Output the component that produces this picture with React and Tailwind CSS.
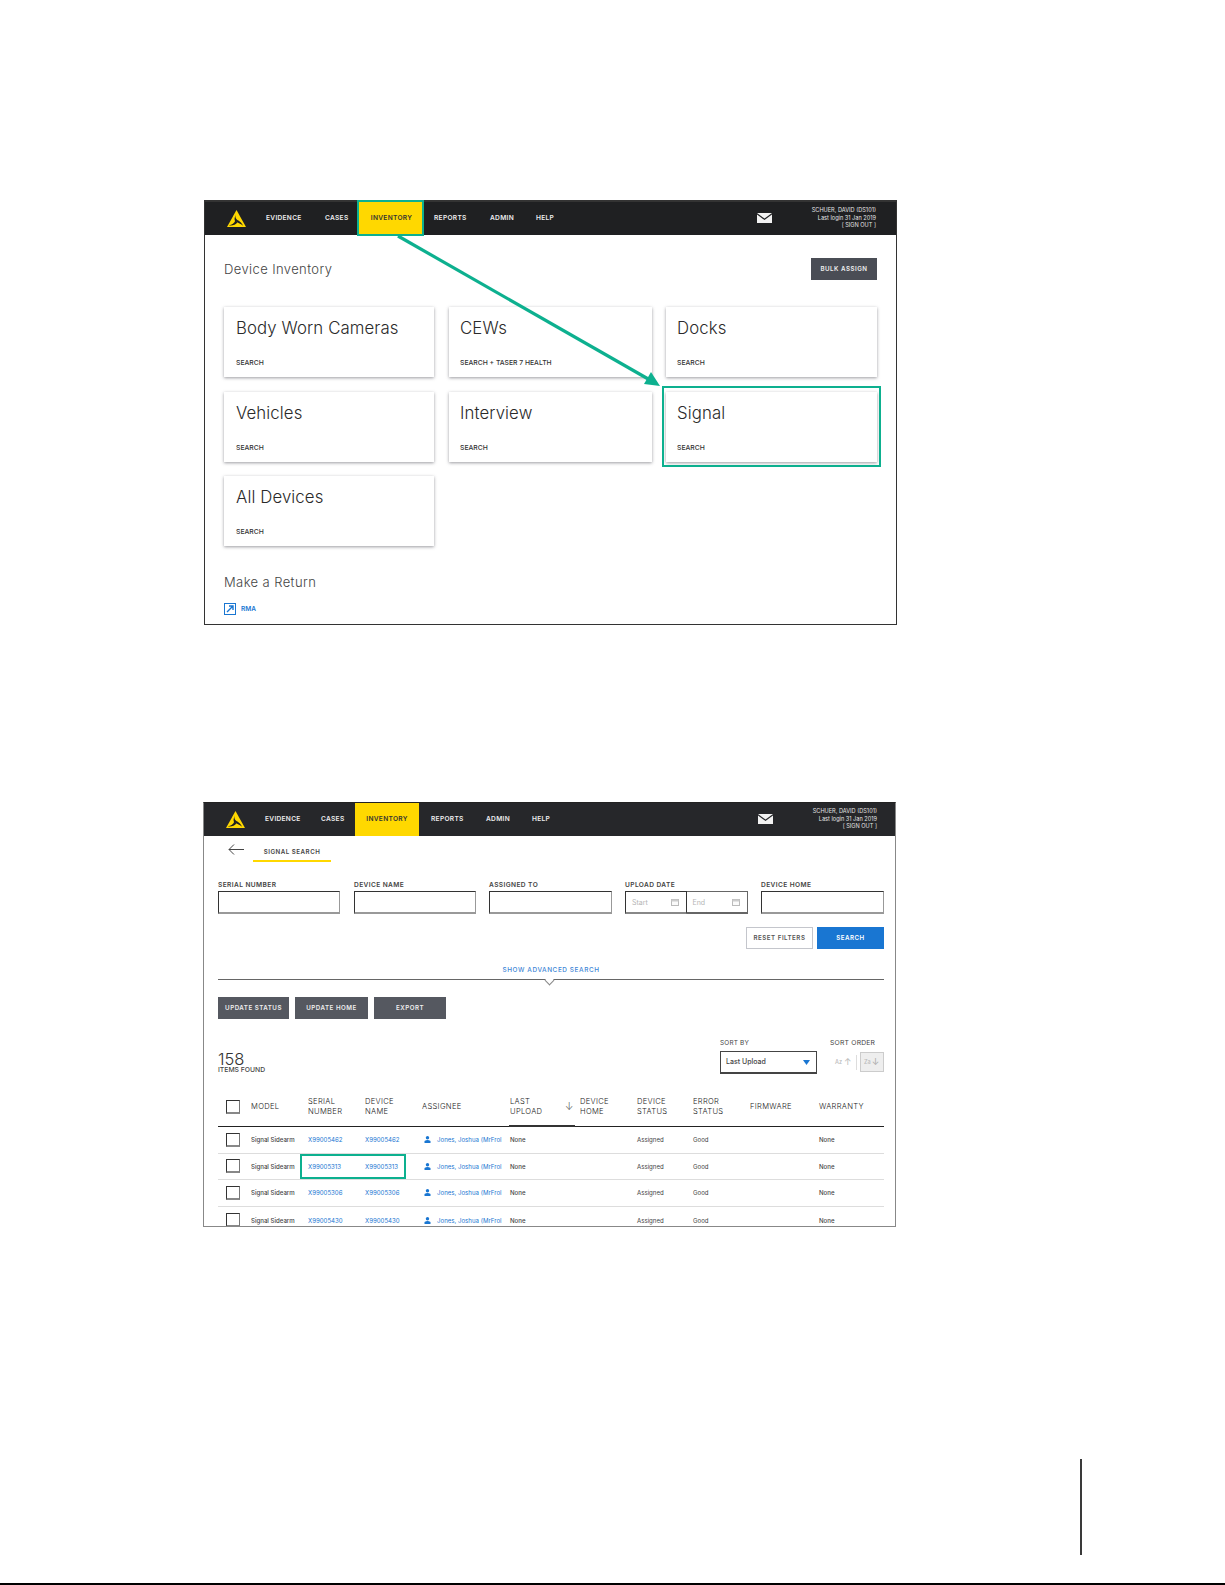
const font = "font-['Inter','Liberation_Sans',sans-serif]";

function Logo() {
  return (
    <svg width="19" height="18" viewBox="0 0 20 19">
      <path d="M10 0 L20 18 L0 18 Z" fill="#ffd800" />
      <path d="M10 4 C8 7 9 10 12 11 C14 12 15.5 14 17 16.5 C14 14.5 11 13.5 9 12 C7.5 11 7.5 8 10 4 Z" fill="#1f2022" />
      <path d="M8.8 11 C8 14 5 15.5 2 16 C5 16.8 9 15.8 11 12.8 Z" fill="#1f2022" />
    </svg>
  );
}

function Envelope() {
  return (
    <svg width="15" height="10" viewBox="0 0 15 10">
      <path d="M0 0 H15 L7.5 5.5 Z" fill="#f2f2f2" />
      <path d="M0 1.5 L7.5 7 L15 1.5 V10 H0 Z" fill="#f2f2f2" />
    </svg>
  );
}

const navText = "text-[6.6px] font-semibold tracking-[0.3px]";

function Nav({ variant }) {
  const first = variant === 1;
  return (
    <div className={`flex h-[33px] shrink-0 items-center ${first ? "bg-[#1f2022]" : "bg-[#26272a]"}`}>
      <div className="ml-[22px] flex w-[39px] shrink-0">
        <Logo />
      </div>
      <span className={`${navText} text-[#eeeeee] ${first ? "w-[59px]" : "w-[56px]"}`}>EVIDENCE</span>
      <span className={`${navText} text-[#eeeeee] ${first ? "w-[33px]" : "w-[34px]"}`}>CASES</span>
      <span className={`${navText} flex h-full w-[64px] items-center justify-center bg-[#ffd800] text-[#333333] ${first ? "pl-[3px]" : ""}`}>INVENTORY</span>
      <span className={`${navText} ml-[12px] text-[#eeeeee] ${first ? "w-[56px]" : "w-[55px]"}`}>REPORTS</span>
      <span className={`${navText} w-[46px] text-[#eeeeee]`}>ADMIN</span>
      <span className={`${navText} text-[#eeeeee]`}>HELP</span>
      <div className="mb-[1px] ml-auto mr-[40px]">
        <Envelope />
      </div>
      <div className={`flex flex-col items-end text-[5.6px] leading-[7.5px] text-[#e4e4e4] ${first ? "mr-[20px]" : "mr-[18px]"}`}>
        <span>SCHUER, DAVID (DS101)</span>
        <span>Last login 31 Jan 2019</span>
        <span>[ SIGN OUT ]</span>
      </div>
    </div>
  );
}

function Card({ title, sub, width, className = "" }) {
  return (
    <div className={`flex h-[70px] shrink-0 flex-col bg-white shadow-[0_1px_3px_rgba(60,60,70,0.5)] ${width} ${className}`}>
      <span className="mt-[11px] text-[16.8px] font-light leading-[21px] tracking-[0.1px] text-[#2a2a2a]">{title}</span>
      <span className="mb-[10px] mt-auto text-[6.8px] font-medium leading-[8px] text-[#333333]">{sub}</span>
    </div>
  );
}

function InventoryScreen() {
  return (
    <div className="relative ml-[204px] flex h-[425px] w-[693px] flex-col border border-t-2 border-[#333333]">
      <Nav variant={1} />
      <div className="flex flex-col pl-[19px] pr-[19px]">
        <div className="mt-[22px] flex items-center justify-between">
          <span className="text-[13px] font-light leading-[24px] tracking-[0.4px] text-[#444444]">Device Inventory</span>
          <button className="h-[22px] w-[66px] bg-[#4a4d55] text-[6.2px] font-semibold tracking-[0.5px] text-[#f0f0f0]">BULK ASSIGN</button>
        </div>
        <div className="mt-[26px] flex">
          <Card title="Body Worn Cameras" sub="SEARCH" width="w-[210px] pl-[12px]" />
          <Card title="CEWs" sub="SEARCH + TASER 7 HEALTH" width="w-[203px] pl-[11px]" className="ml-[15px]" />
          <Card title="Docks" sub="SEARCH" width="w-[211px] pl-[11px]" className="ml-[14px]" />
        </div>
        <div className="mt-[15px] flex">
          <Card title="Vehicles" sub="SEARCH" width="w-[210px] pl-[12px]" />
          <Card title="Interview" sub="SEARCH" width="w-[203px] pl-[11px]" className="ml-[15px]" />
          <Card title="Signal" sub="SEARCH" width="w-[211px] pl-[11px]" className="ml-[14px]" />
        </div>
        <div className="mt-[14px] flex">
          <Card title="All Devices" sub="SEARCH" width="w-[210px] pl-[12px]" />
        </div>
        <span className="mt-[27px] text-[13px] font-light leading-[18px] tracking-[0.4px] text-[#444444]">Make a Return</span>
        <div className="mt-[14px] flex items-center gap-[5px]">
          <svg className="mt-[-2px]" width="12" height="12" viewBox="0 0 12 12">
            <rect x="0.5" y="0.5" width="11" height="11" fill="none" stroke="#1976d2" />
            <path d="M3 9 L8.5 3.5 M5 3 H9 V7" fill="none" stroke="#1976d2" strokeWidth="1.4" />
          </svg>
          <span className="text-[6.5px] font-semibold text-[#1976d2]">RMA</span>
        </div>
      </div>
      {/* annotations on top of the screenshot */}
      <div className="pointer-events-none absolute left-[152px] top-[-2px] h-[36px] w-[67px] border-2 border-[#0db08f]" />
      <div className="pointer-events-none absolute left-[457px] top-[184px] h-[81px] w-[219px] border-2 border-[#0db08f]" />
      <svg className="pointer-events-none absolute left-[-1px] top-[-2px]" width="693" height="425" viewBox="0 0 693 425">
        <path d="M194 36 L446 180" stroke="#0db08f" strokeWidth="3.2" fill="none" />
        <path d="M456 186 L440 184 L447 172 Z" fill="#0db08f" />
      </svg>
    </div>
  );
}

const labelText = "text-[6.6px] font-semibold leading-[8px] tracking-[0.4px] text-[#444444]";

function Field({ label, width }) {
  return (
    <div className={`flex flex-col ${width}`}>
      <span className={labelText}>{label}</span>
      <div className="mt-[2px] h-[23px] border border-[#333333] border-b-2 border-b-[#999999] border-r-[#999999] bg-white" />
    </div>
  );
}

function DateCell({ text, dark }) {
  return (
    <div className={`flex h-[23px] w-[61.5px] items-center justify-between border border-b-2 pl-[6px] pr-[7px] ${dark ? "border-[#333333] border-b-[#888888]" : "border-[#666666] border-l-0"}`}>
      <span className="text-[7px] leading-[9px] text-[#b5b5b5]">{text}</span>
      <svg width="8" height="7" viewBox="0 0 8 7">
        <rect x="0.5" y="0.5" width="7" height="6" fill="#fafafa" stroke="#bbbbbb" />
        <rect x="0.5" y="0.5" width="7" height="2" fill="#cccccc" />
      </svg>
    </div>
  );
}

const columns = "grid grid-cols-[33px_57px_57px_57px_88px_70px_57px_56px_57px_69px_65px]";

function Checkbox() {
  return <div className="h-[14px] w-[14px] border border-[#333333] border-b-2 border-b-[#888888] border-r-[#777777] bg-white" />;
}

function HeaderCell({ children, className = "" }) {
  return <div className={`flex items-center text-[7.6px] font-light leading-[9.5px] tracking-[0.3px] text-[#222222] ${className}`}>{children}</div>;
}

const rows = ["X99005462", "X99005313", "X99005306", "X99005430"];

function Row({ serial, last }) {
  return (
    <div className={`${columns} h-[26.6px] shrink-0 items-center text-[6.1px] text-[#444444] ${last ? "" : "border-b border-[#dddddd]"}`}>
      <div className="pl-[8px]">
        <Checkbox />
      </div>
      <span className="font-medium">Signal Sidearm</span>
      <span className="text-[#1976d2]">{serial}</span>
      <span className="text-[#1976d2]">{serial}</span>
      <span className="flex items-center gap-[6px] whitespace-nowrap pl-[2px] text-[#1976d2]">
        <svg width="7" height="7" viewBox="0 0 7 7">
          <circle cx="3.5" cy="1.7" r="1.7" fill="#1976d2" />
          <path d="M0.5 7 V5 Q3.5 3 6.5 5 V7 Z" fill="#1976d2" />
        </svg>
        Jones, Joshua (MrFrol
      </span>
      <span className="font-medium">None</span>
      <span />
      <span>Assigned</span>
      <span>Good</span>
      <span />
      <span className="font-medium">None</span>
    </div>
  );
}

function SearchScreen() {
  return (
    <div className="relative ml-[203px] mt-[177px] flex h-[425px] w-[693px] flex-col overflow-hidden border border-[#888888] border-t-[#222222]">
      <Nav variant={2} />
      <div className="flex flex-col pl-[14px] pr-[11px]">
        <div className="relative flex h-[27px]">
          <svg className="ml-[10px] mt-[8px]" width="16" height="11" viewBox="0 0 16 11">
            <path d="M16 5.5 H1 M6 0.5 L1 5.5 L6 10.5" fill="none" stroke="#444444" strokeWidth="1" />
          </svg>
          <div className="ml-[9px] mt-[11px] flex h-fit w-[78px] flex-col items-center border-b-2 border-[#ffd800] pb-[4px]">
            <span className="text-[6.2px] font-semibold leading-[9px] tracking-[0.5px] text-[#444444]">SIGNAL SEARCH</span>
          </div>
        </div>
        <div className="mt-[18px] flex">
          <Field label="SERIAL NUMBER" width="w-[122px]" />
          <div className="w-[14px]" />
          <Field label="DEVICE NAME" width="w-[122px]" />
          <div className="w-[13px]" />
          <Field label="ASSIGNED TO" width="w-[123px]" />
          <div className="w-[13px]" />
          <div className="flex w-[123px] flex-col">
            <span className={labelText}>UPLOAD DATE</span>
            <div className="mt-[2px] flex">
              <DateCell text="Start" dark />
              <DateCell text="End" />
            </div>
          </div>
          <div className="w-[13px]" />
          <Field label="DEVICE HOME" width="w-[123px]" />
        </div>
        <div className="mt-[13px] flex justify-end gap-[4px]">
          <button className="h-[22px] w-[67px] border border-[#c4c6cc] bg-white text-[6.2px] font-semibold tracking-[0.5px] text-[#555555]">RESET FILTERS</button>
          <button className="h-[22px] w-[67px] bg-[#1976d2] text-[6.2px] font-semibold tracking-[0.5px] text-white">SEARCH</button>
        </div>
        <div className="mt-[17px] text-center text-[6.4px] font-medium leading-[9px] tracking-[0.6px] text-[#3d86d6]">SHOW ADVANCED SEARCH</div>
        <div className="relative mt-[4px] border-b border-[#666666]">
          <div className="absolute left-[328px] top-[-2px] h-[7px] w-[7px] rotate-45 border-b border-r border-[#888888] bg-white" />
        </div>
        <div className="mt-[17px] flex gap-[6px]">
          <button className="h-[22px] w-[71px] bg-[#555860] text-[6.2px] font-semibold tracking-[0.5px] text-[#eeeeee]">UPDATE STATUS</button>
          <button className="h-[22px] w-[73px] bg-[#555860] text-[6.2px] font-semibold tracking-[0.5px] text-[#eeeeee]">UPDATE HOME</button>
          <button className="h-[22px] w-[72px] bg-[#555860] text-[6.2px] font-semibold tracking-[0.5px] text-[#eeeeee]">EXPORT</button>
        </div>
        <div className="mt-[19px] flex h-[38px]">
          <div className="mt-[15px] flex flex-col">
            <span className="text-[16.5px] font-light leading-[13px] text-[#333333]">158</span>
            <span className="text-[6.8px] font-medium leading-[8px] text-[#444444]">ITEMS FOUND</span>
          </div>
          <div className="ml-auto mt-[1px] flex flex-col">
            <span className="text-[6.4px] leading-[8px] tracking-[0.2px] text-[#444444]">SORT BY</span>
            <div className="mt-[4px] flex h-[23px] w-[97px] items-center justify-between border border-b-2 border-[#444444] pl-[5px] pr-[6px]">
              <span className="text-[7px] font-medium text-[#444444]">Last Upload</span>
              <svg width="7" height="5" viewBox="0 0 7 5">
                <path d="M0 0 H7 L3.5 5 Z" fill="#1976d2" />
              </svg>
            </div>
          </div>
          <div className="ml-[13px] mt-[1px] flex w-[54px] flex-col">
            <span className="whitespace-nowrap text-[6.8px] leading-[8px] tracking-[0.2px] text-[#444444]">SORT ORDER</span>
            <div className="mt-[5px] flex h-[20px] items-center">
              <span className="ml-[5px] text-[5.6px] font-medium text-[#bbbbbb]">Az</span>
              <span className="ml-[2px] text-[9px] leading-[10px] text-[#bbbbbb]">↑</span>
              <div className="ml-[4px] h-[15px] w-px bg-[#dddddd]" />
              <div className="ml-[3px] flex h-[20px] w-[24px] items-center justify-center gap-[1px] border border-[#cccccc] bg-[#eeeeee]">
                <span className="text-[5.6px] font-medium text-[#bbbbbb]">Za</span>
                <span className="text-[9px] leading-[10px] text-[#aaaaaa]">↓</span>
              </div>
            </div>
          </div>
        </div>
        <div className={`${columns} mt-[13px] h-[38px] border-b border-[#222222] pb-[2px]`}>
          <div className="flex items-center pl-[8px]">
            <Checkbox />
          </div>
          <HeaderCell>MODEL</HeaderCell>
          <HeaderCell>SERIAL<br />NUMBER</HeaderCell>
          <HeaderCell>DEVICE<br />NAME</HeaderCell>
          <HeaderCell>ASSIGNEE</HeaderCell>
          <HeaderCell className="relative">
            LAST<br />UPLOAD
            <span className="absolute left-[55px] text-[10px] text-[#555555]">↓</span>
            <span className="absolute bottom-[-3px] left-[-1px] h-[2px] w-[66px] bg-[#333333]" />
          </HeaderCell>
          <HeaderCell>DEVICE<br />HOME</HeaderCell>
          <HeaderCell>DEVICE<br />STATUS</HeaderCell>
          <HeaderCell>ERROR<br />STATUS</HeaderCell>
          <HeaderCell>FIRMWARE</HeaderCell>
          <HeaderCell>WARRANTY</HeaderCell>
        </div>
        <div className="flex flex-col">
          {rows.map((serial, i) => (
            <Row key={serial} serial={serial} last={i === rows.length - 1} />
          ))}
        </div>
      </div>
      <div className="pointer-events-none absolute left-[96px] top-[351px] h-[25px] w-[106px] border-2 border-[#0db08f]" />
    </div>
  );
}

export default function App() {
  return (
    <div className={`flex h-[1585px] w-[1225px] flex-col overflow-hidden bg-white pt-[200px] ${font}`}>
      <InventoryScreen />
      <SearchScreen />
      <div className="ml-[1080px] mt-[232px] h-[96px] w-[2px] bg-[#3a3a3a]" />
      <div className="mt-auto h-[2px] w-full bg-black" />
    </div>
  );
}
